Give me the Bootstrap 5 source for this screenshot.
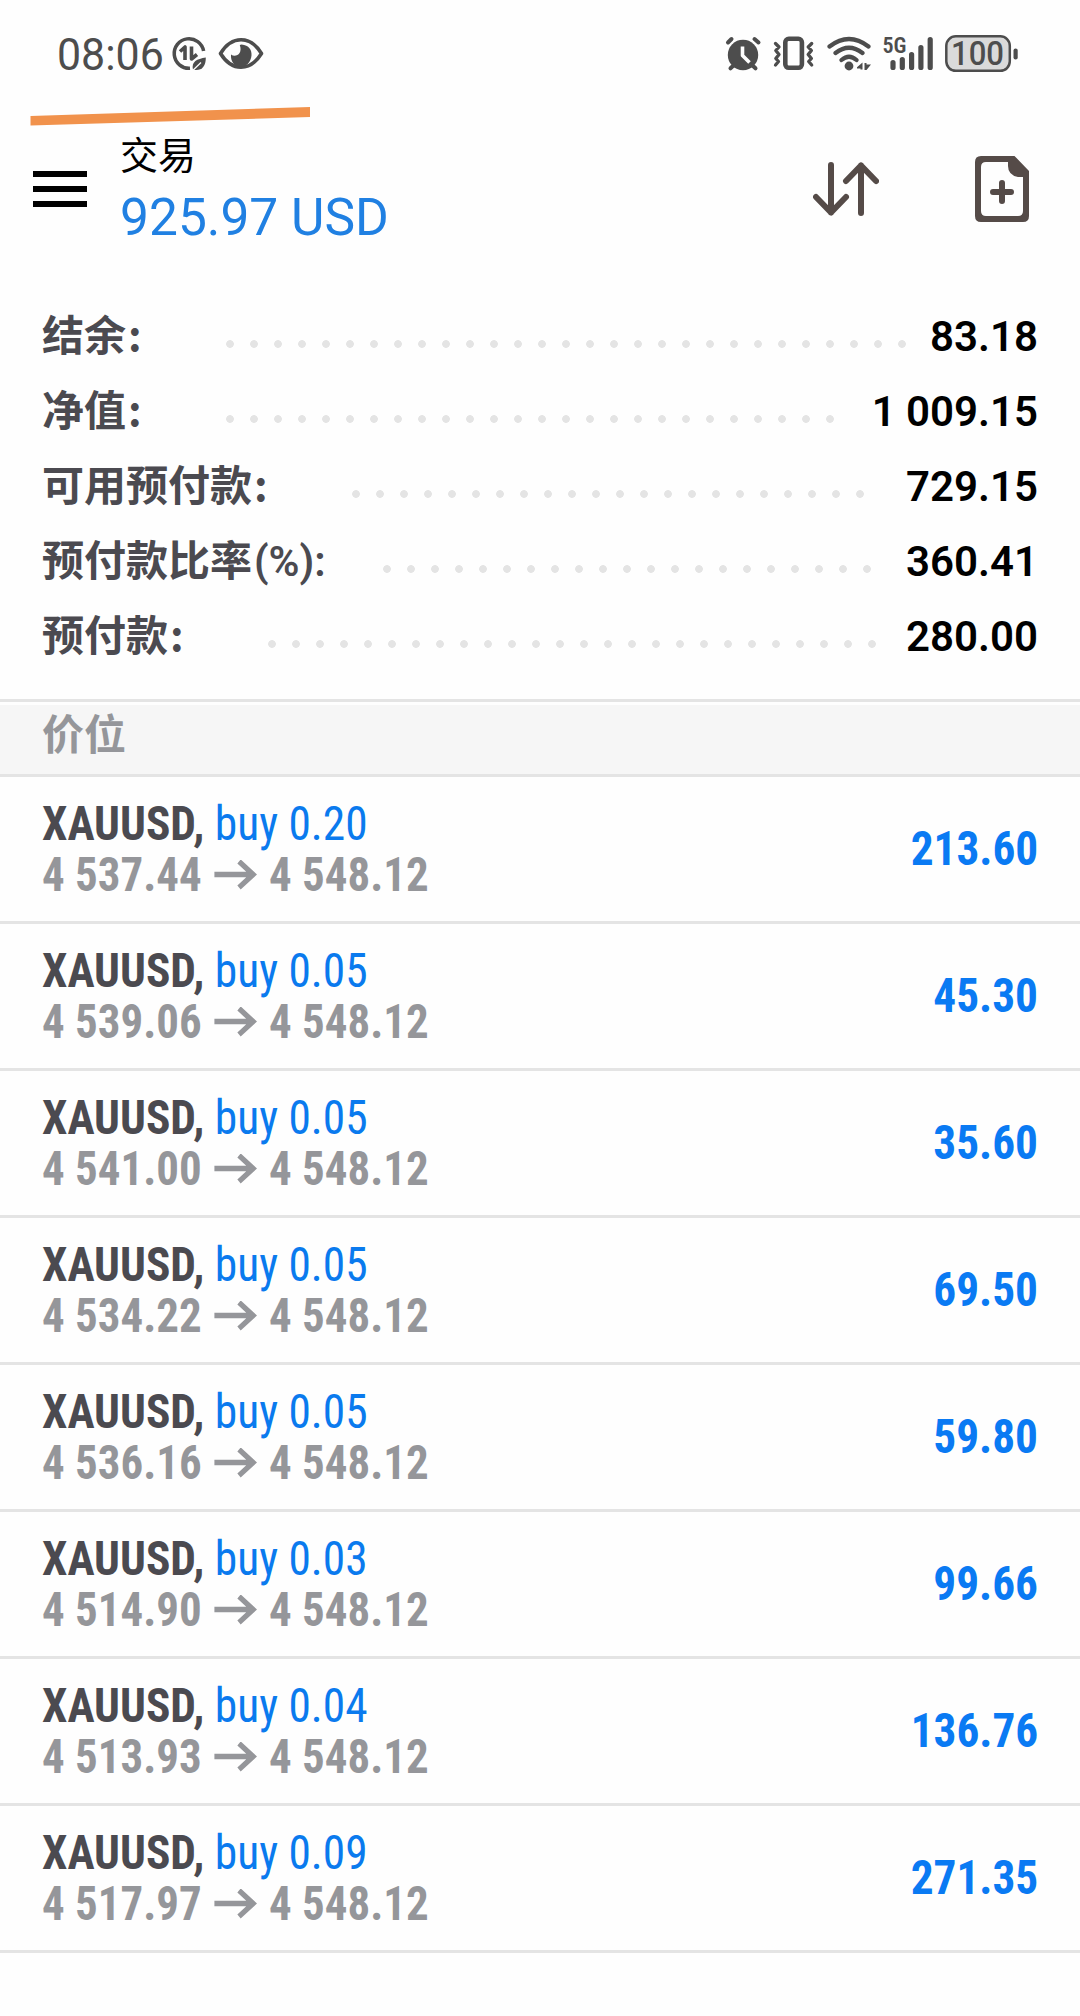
<!DOCTYPE html>
<html lang="zh-CN">
<head>
<meta charset="utf-8">
<meta name="viewport" content="width=device-width, initial-scale=1">
<title>交易</title>
<link href="https://cdn.jsdelivr.net/npm/bootstrap@5.3.0/dist/css/bootstrap.min.css" rel="stylesheet">
<style>
body { font-family: Roboto, "Noto Sans CJK SC", sans-serif; color: #000; background: #fefefe; overflow: hidden; }
svg { display: block; flex: none; }
.status-bar { height: 108px; padding: 0 60px 0 57px; color: #4d4d4d; }
.clock { width: 108px; padding-top: 2px; font-size: 44px; line-height: 50px; white-space: nowrap; }
.clock span { display: inline-block; transform-origin: 0 50%; transform: scaleX(.975); font-weight: 430; }
.accent-stroke { left: 30px; top: 106px; }
.app-header { height: 162px; padding: 0 51px 0 33px; }
.page-title { font-size: 38px; line-height: 50px; padding-top: 8px; }
.floating { font-size: 51.5px; line-height: 74px; color: #2080e2; }
.header-text { margin-left: 33px; }
.summary { padding: 29px 42px 25px; }
.summary-row { height: 75px; }
.summary-label { flex: none; width: var(--label); font: 700 42px/40px "Noto Sans CJK SC", sans-serif; color: #4b4a50; white-space: nowrap; }
.summary-label i { font-style: normal; margin-left: 2px; }
.summary-label .latin { font-family: Roboto, sans-serif; font-weight: 580; }
.leader { flex: none; height: 8px; align-self: center; margin-top: 15px; width: calc(var(--dots) * 24px - 16px);
  background: radial-gradient(circle at 4px 4px, #e4e4e4 3.5px, transparent 4.2px) 0 0 / 24px 8px repeat-x; }
.summary-value { font-size: 42px; line-height: 75px; font-weight: 600; }
.section-title { border-top: 3px solid #e4e4e4; border-bottom: 3px solid #e4e4e4; padding-top: 3px; }
.section-title h2 { height: 69px; padding-left: 42px; background: #f6f6f6; color: #95969a; font: 700 42px/54px "Noto Sans CJK SC", sans-serif; }
.position { height: 147px; padding: 0 42px; border-bottom: 3px solid #e4e4e4; font-size: 48px; line-height: 51px; font-stretch: 75%; }
.squeeze { display: flex; align-items: center; white-space: nowrap; transform-origin: 0 50%; transform: scaleX(.945); }
.symbol { font-weight: 700; color: #4b4a50; white-space: pre; }
.blue { color: #0a7aee; font-weight: 430; }
.prices { color: #95969a; font-weight: 700; transform: scaleX(.936); }
.prices svg { margin: 0 13px 0 13px; }
.profit { font-weight: 700; color: #0a7af3; transform-origin: 100% 50%; transform: scaleX(.943); padding-bottom: 2px; }
</style>
</head>
<body>
<div class="status-bar d-flex align-items-center">
  <div class="clock"><span>08:06</span></div>
  <svg width="110" height="50" viewBox="165 29 110 50" fill="none" stroke="#4d4d4d">
    <path d="M203.600 51A14.800 14.800 0 1 0 190 68.300" stroke-width="3.500"/>
    <path d="M180 51.500L185 47V60M191.500 46.500V59L197 54.500" stroke-width="3.600" stroke-linejoin="round"/>
    <path d="M205.800 57.500C197 59 191 61.500 193 69.700C201.500 71.200 205.800 67 205.800 57.500Z" fill="#4d4d4d" stroke="none"/>
    <path d="M192.500 70.800L201 62.500" stroke="#fefefe" stroke-width="1.300"/>
    <path d="M220.500 53.500Q229 39.800 241 39.800T261.500 53.500Q253 67.200 241 67.200T220.500 53.500Z" stroke-width="3.600" stroke-linejoin="round"/>
    <path d="M241.500 44.500C249 45 252 50 251.500 55.500C251 62 246 67 241 67C234 66.500 230.500 61 231 54.500C235.500 58 243 54 239.800 45Z" fill="#4d4d4d" stroke="none"/>
  </svg>
  <svg class="ms-auto" width="300" height="50" viewBox="720 29 300 50" fill="none" stroke="#4d4d4d" stroke-linecap="round" stroke-linejoin="round">
    <circle cx="743" cy="55" r="15.200" fill="#4d4d4d" stroke="none"/>
    <path d="M728 42.500L731.500 39M754.500 39L758.500 42.500M734 65L730.500 68.300M752 65L755.500 68.300" stroke-width="4"/>
    <path d="M742.500 46.500V55.500L749.500 62.500" stroke="#fefefe" stroke-width="3.600" stroke-linecap="butt"/>
    <rect x="785.300" y="38.800" width="16.600" height="29" rx="3.500" stroke-width="4.600"/>
    <path d="M775.500 43.500L779 47L775.800 50.500L779 54.500L775.800 58.500L778.500 61.500L775.500 65M811.700 43.500L808.200 47L811.400 50.500L808.200 54.500L811.400 58.500L808.700 61.500L811.700 65" stroke-width="3.300"/>
    <path d="M829.500 46.500Q849 31.500 868.500 46.500M835.500 53Q849 42.500 862.500 53M841.500 60Q849 53.500 856.500 60" stroke-width="4.200"/>
    <circle cx="849" cy="66" r="4.400" fill="#4d4d4d" stroke="none"/>
    <path d="M857 67.300L862.500 62.500V69.500H860.500V68.500H857ZM864.500 63H866.500V64.500H871L866.500 70H864.500Z" fill="#4d4d4d" stroke="none"/>
    <text x="882.500" y="52.700" font-size="22" font-weight="600" font-stretch="75%" fill="#4d4d4d" stroke="none" textLength="24" lengthAdjust="spacingAndGlyphs">5G</text>
    <path d="M893 62.500V67.500M902.300 59.500V67.500M911.600 54.500V67.500M920.900 47.500V67.500M930.200 39.500V67.500" stroke-width="5.200"/>
    <rect x="946.300" y="36.300" width="63.500" height="34.500" rx="9.500" fill="#dadada" stroke-width="2.500"/>
    <rect x="1013.500" y="48.500" width="4.200" height="11" rx="2" fill="#4d4d4d" stroke="none"/>
    <text x="951" y="65" font-size="33" font-weight="500" fill="#4d4d4d" stroke="none" textLength="53" lengthAdjust="spacingAndGlyphs">100</text>
  </svg>
</div>
<svg class="accent-stroke position-absolute" width="282" height="20" viewBox="30 106 282 20"><path d="M30.500 116L310 107V117L30.500 125.500Z" fill="#f1924c"/></svg>

<header class="app-header d-flex align-items-center">
  <svg width="54" height="36" viewBox="0 0 54 36"><path d="M0 3H54M0 18H54M0 33H54" stroke="#000" stroke-width="6"/></svg>
  <div class="header-text">
    <div class="page-title">交易</div>
    <div class="floating">925.97 USD</div>
  </div>
  <svg class="ms-auto" width="66" height="54" viewBox="813 162 66 54" fill="none" stroke="#554b48" stroke-width="6" stroke-linecap="round" stroke-linejoin="round"><path d="M831 165V212.500M816 197L831 212.500L846 197M861 213V165.500M846 181L861 165.500L876 181"/></svg>
  <svg style="margin-left:96px" width="54" height="66" viewBox="975 156 54 66">
    <path fill="#554b48" fill-rule="evenodd" d="M981 156H1014.500L1029 171V216Q1029 222 1023 222H981Q975 222 975 216V162Q975 156 981 156ZM986 162Q981 162 981 167V211Q981 216 986 216H1018Q1023 216 1023 211V177H1018Q1008 175 1008 166V162Z"/>
    <path d="M993 192H1011M1002 183V201" stroke="#554b48" stroke-width="6" stroke-linecap="round"/>
  </svg>
</header>

<section class="summary">
  <div class="summary-row d-flex align-items-baseline" style="--label:184px;--dots:29"><span class="summary-label">结余<i>:</i></span><span class="leader"></span><span class="summary-value ms-auto">83.18</span></div>
  <div class="summary-row d-flex align-items-baseline" style="--label:184px;--dots:26"><span class="summary-label">净值<i>:</i></span><span class="leader"></span><span class="summary-value ms-auto">1 009.15</span></div>
  <div class="summary-row d-flex align-items-baseline" style="--label:310px;--dots:22"><span class="summary-label">可用预付款<i>:</i></span><span class="leader"></span><span class="summary-value ms-auto">729.15</span></div>
  <div class="summary-row d-flex align-items-baseline" style="--label:341px;--dots:21"><span class="summary-label">预付款比率<i class="latin">(%):</i></span><span class="leader"></span><span class="summary-value ms-auto">360.41</span></div>
  <div class="summary-row d-flex align-items-baseline" style="--label:226px;--dots:26"><span class="summary-label">预付款<i>:</i></span><span class="leader"></span><span class="summary-value ms-auto">280.00</span></div>
</section>

<div class="section-title"><h2 class="m-0">价位</h2></div>
<main id="positions"></main>

<script src="https://cdn.jsdelivr.net/npm/bootstrap@5.3.0/dist/js/bootstrap.bundle.min.js"></script>
<script>
const positions = [
  ["0.20", "4 537.44", "213.60"],
  ["0.05", "4 539.06", "45.30"],
  ["0.05", "4 541.00", "35.60"],
  ["0.05", "4 534.22", "69.50"],
  ["0.05", "4 536.16", "59.80"],
  ["0.03", "4 514.90", "99.66"],
  ["0.04", "4 513.93", "136.76"],
  ["0.09", "4 517.97", "271.35"]
];
document.getElementById("positions").innerHTML = positions.map(([lots, open, profit]) => `
  <div class="position d-flex align-items-center justify-content-between">
    <div>
      <div class="squeeze"><span class="symbol">XAUUSD, </span><span class="blue">buy ${lots}</span></div>
      <div class="squeeze prices"><span>${open}</span><svg width="46" height="30" viewBox="0 0 46 30" fill="none" stroke="#95969a" stroke-width="5.500"><path d="M0 14.500H41M26.500 1.500L41.500 14.500L26.500 27.500"/></svg><span>4 548.12</span></div>
    </div>
    <div class="squeeze profit">${profit}</div>
  </div>`).join("");
</script>
</body>
</html>
